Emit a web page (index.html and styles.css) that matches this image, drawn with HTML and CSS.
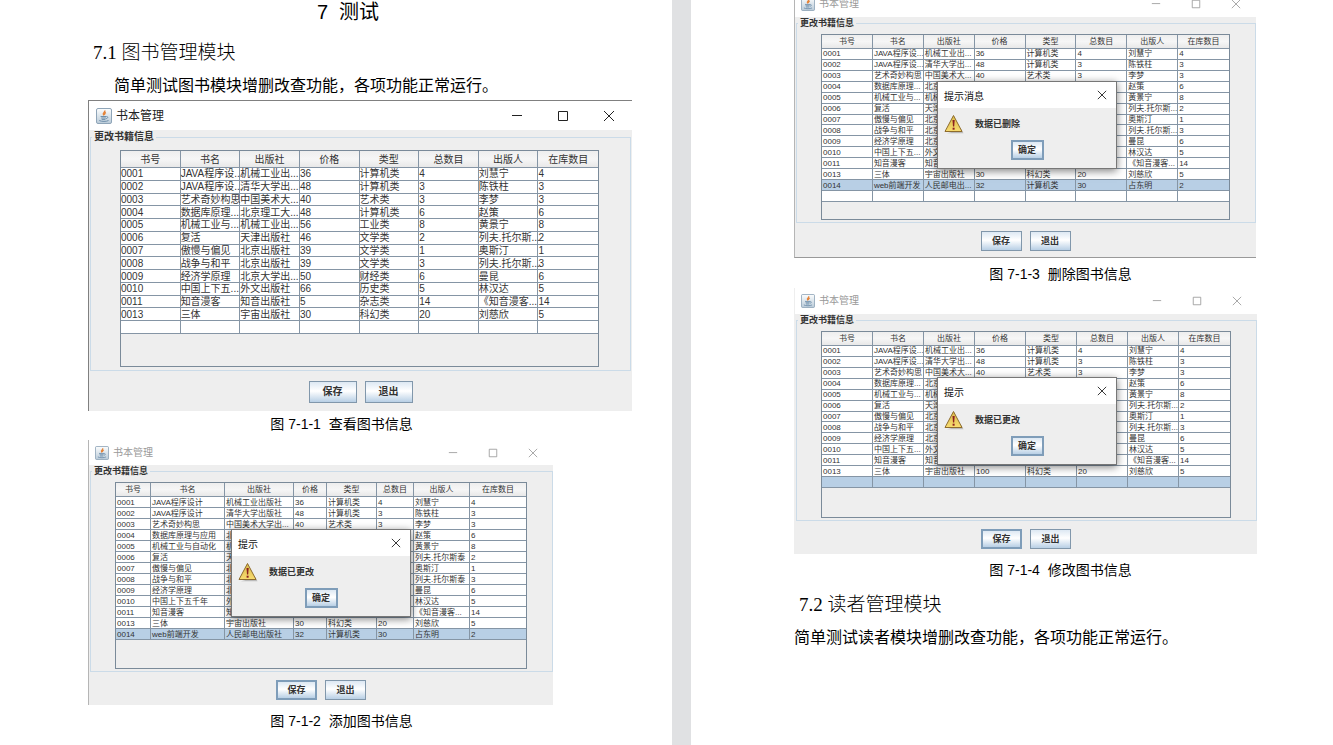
FILE: index.html
```html
<!DOCTYPE html>
<html lang="zh-CN">
<head>
<meta charset="utf-8">
<title>7 测试</title>
<link rel="stylesheet" href="styles.css">
</head>
<body>
<svg class="defs" aria-hidden="true">
  <defs>
    <linearGradient id="tile" x1="0" y1="0" x2="0" y2="1"><stop offset="0" stop-color="#fdfefe"/><stop offset="1" stop-color="#b9cad8"/></linearGradient>
    <linearGradient id="amber" x1="0" y1="0" x2="0" y2="1"><stop offset="0" stop-color="#d9b94a"/><stop offset="1" stop-color="#f8dc70"/></linearGradient>
  </defs>
  <symbol id="java" viewBox="0 0 16 16">
    <rect x=".5" y=".5" width="15" height="15" rx="1.5" fill="url(#tile)" stroke="#8fa5b8"/>
    <path d="M8.600 2.600c1.300 1.500-2.200 2.300-1.100 3.900l.5.9M10 4.600c-1.600.6-1.800 1.200-1.200 2.300" fill="none" stroke="#e5843a" stroke-width="1.500"/>
    <path d="M4.600 8.500h5.900M5.200 10h4.700M5.700 11.400h3.700M10.600 8.600c1.800-.2 1.500 1.700-.4 2" fill="none" stroke="#6f8fab"/>
    <path d="M3.300 12.500c2 1.200 7.400 1.200 9.200 0" fill="none" stroke="#6f8fab"/>
  </symbol>
  <symbol id="min" viewBox="0 0 12 12"><path d="M1 5.500h10" fill="none" stroke="currentColor"/></symbol>
  <symbol id="max" viewBox="0 0 12 12"><path d="M1.500 1.500h9v9h-9z" fill="none" stroke="currentColor"/></symbol>
  <symbol id="close" viewBox="0 0 12 12"><path d="M1 1l10 10M11 1L1 11" fill="none" stroke="currentColor"/></symbol>
  <symbol id="warn" viewBox="0 0 20 20">
    <path d="M3 19.200h16.500l-2-4z" fill="#bbb"/>
    <path d="M9.500 1.500l8.500 16H1z" fill="url(#amber)" stroke="#8d6b2c" stroke-linejoin="round"/>
    <path d="M8.500 6h2.200l-.5 6.500H9z" fill="#8c1f1f"/><rect x="8.600" y="13.700" width="2" height="2" fill="#8c1f1f"/>
  </symbol>
</svg>
<main class="spread">
<section class="page page-left">
  <h1 class="chapter">7&nbsp; 测试</h1>
  <h2 class="section">7.1 图书管理模块</h2>
  <p class="para indent">简单测试图书模块增删改查功能，各项功能正常运行。</p>

  <figure class="figure">
    <div class="window large">
      <header class="titlebar"><svg class="app-icon"><use href="#java"/></svg><span class="title">书本管理</span>
        <button class="ctl" aria-label="最小化"><svg><use href="#min"/></svg></button><button class="ctl" aria-label="最大化"><svg><use href="#max"/></svg></button><button class="ctl" aria-label="关闭"><svg><use href="#close"/></svg></button></header>
      <fieldset class="group"><legend>更改书籍信息</legend>
        <div class="pane"><table class="books books-1">
          <thead><tr><th>书号<th>书名<th>出版社<th>价格<th>类型<th>总数目<th>出版人<th>在库数目</thead>
          <tbody>
          <tr><td>0001<td>JAVA程序设...<td>机械工业出...<td>36<td>计算机类<td>4<td>刘慧宁<td>4
          <tr><td>0002<td>JAVA程序设...<td>清华大学出...<td>48<td>计算机类<td>3<td>陈铁柱<td>3
          <tr><td>0003<td>艺术奇妙构思<td>中国美术大...<td>40<td>艺术类<td>3<td>李梦<td>3
          <tr><td>0004<td>数据库原理...<td>北京理工大...<td>48<td>计算机类<td>6<td>赵策<td>6
          <tr><td>0005<td>机械工业与...<td>机械工业出...<td>56<td>工业类<td>8<td>黄景宁<td>8
          <tr><td>0006<td>复活<td>天津出版社<td>46<td>文学类<td>2<td>列夫.托尔斯...<td>2
          <tr><td>0007<td>傲慢与偏见<td>北京出版社<td>39<td>文学类<td>1<td>奥斯汀<td>1
          <tr><td>0008<td>战争与和平<td>北京出版社<td>39<td>文学类<td>3<td>列夫.托尔斯...<td>3
          <tr><td>0009<td>经济学原理<td>北京大学出...<td>50<td>财经类<td>6<td>曼昆<td>6
          <tr><td>0010<td>中国上下五...<td>外文出版社<td>66<td>历史类<td>5<td>林汉达<td>5
          <tr><td>0011<td>知音漫客<td>知音出版社<td>5<td>杂志类<td>14<td>《知音漫客...<td>14
          <tr><td>0013<td>三体<td>宇宙出版社<td>30<td>科幻类<td>20<td>刘慈欣<td>5
          <tr><td><td><td><td><td><td><td><td>
          </tbody></table></div>
      </fieldset>
      <div class="actions"><button class="btn">保存</button><button class="btn">退出</button></div>
    </div>
    <figcaption class="caption">图 7-1-1&nbsp; 查看图书信息</figcaption>
  </figure>

  <figure class="figure">
    <div class="window small win-add">
      <header class="titlebar"><svg class="app-icon"><use href="#java"/></svg><span class="title">书本管理</span>
        <button class="ctl" aria-label="最小化"><svg><use href="#min"/></svg></button><button class="ctl" aria-label="最大化"><svg><use href="#max"/></svg></button><button class="ctl" aria-label="关闭"><svg><use href="#close"/></svg></button></header>
      <fieldset class="group"><legend>更改书籍信息</legend>
        <div class="pane"><table class="books books-2">
          <colgroup><col class="c-id"><col class="c-name"><col class="c-press"><col class="c-price"><col class="c-type"><col class="c-total"><col class="c-author"><col></colgroup>
          <thead><tr><th>书号<th>书名<th>出版社<th>价格<th>类型<th>总数目<th>出版人<th>在库数目</thead>
          <tbody>
          <tr><td>0001<td>JAVA程序设计<td>机械工业出版社<td>36<td>计算机类<td>4<td>刘慧宁<td>4
          <tr><td>0002<td>JAVA程序设计<td>清华大学出版社<td>48<td>计算机类<td>3<td>陈铁柱<td>3
          <tr><td>0003<td>艺术奇妙构思<td>中国美术大学出...<td>40<td>艺术类<td>3<td>李梦<td>3
          <tr><td>0004<td>数据库原理与应用<td>北<td><td><td><td>赵策<td>6
          <tr><td>0005<td>机械工业与自动化<td>机<td><td><td><td>黄景宁<td>8
          <tr><td>0006<td>复活<td>天<td><td><td><td>列夫.托尔斯泰<td>2
          <tr><td>0007<td>傲慢与偏见<td>北<td><td><td><td>奥斯汀<td>1
          <tr><td>0008<td>战争与和平<td>北<td><td><td><td>列夫.托尔斯泰<td>3
          <tr><td>0009<td>经济学原理<td>北<td><td><td><td>曼昆<td>6
          <tr><td>0010<td>中国上下五千年<td>外<td><td><td><td>林汉达<td>5
          <tr><td>0011<td>知音漫客<td>知<td><td><td><td>《知音漫客...<td>14
          <tr><td>0013<td>三体<td>宇宙出版社<td>30<td>科幻类<td>20<td>刘慈欣<td>5
          <tr class="selected"><td>0014<td>web前端开发<td>人民邮电出版社<td>32<td>计算机类<td>30<td>占东明<td>2
          </tbody></table></div>
      </fieldset>
      <div class="actions"><button class="btn focused">保存</button><button class="btn">退出</button></div>
      <div class="dialog" role="dialog" aria-label="提示">
        <div class="dialog-bar"><span>提示</span><button class="ctl" aria-label="关闭"><svg><use href="#close"/></svg></button></div>
        <div class="dialog-msg"><svg class="warn"><use href="#warn"/></svg><strong>数据已更改</strong></div>
        <button class="btn ok">确定</button>
      </div>
    </div>
    <figcaption class="caption">图 7-1-2&nbsp; 添加图书信息</figcaption>
  </figure>
</section>

<section class="page page-right">
  <figure class="figure">
    <div class="window small win-delete">
      <header class="titlebar"><svg class="app-icon"><use href="#java"/></svg><span class="title">书本管理</span>
        <button class="ctl" aria-label="最小化"><svg><use href="#min"/></svg></button><button class="ctl" aria-label="最大化"><svg><use href="#max"/></svg></button><button class="ctl" aria-label="关闭"><svg><use href="#close"/></svg></button></header>
      <fieldset class="group"><legend>更改书籍信息</legend>
        <div class="pane"><table class="books books-3">
          <thead><tr><th>书号<th>书名<th>出版社<th>价格<th>类型<th>总数目<th>出版人<th>在库数目</thead>
          <tbody>
          <tr><td>0001<td>JAVA程序设...<td>机械工业出...<td>36<td>计算机类<td>4<td>刘慧宁<td>4
          <tr><td>0002<td>JAVA程序设...<td>清华大学出...<td>48<td>计算机类<td>3<td>陈铁柱<td>3
          <tr><td>0003<td>艺术奇妙构思<td>中国美术大...<td>40<td>艺术类<td>3<td>李梦<td>3
          <tr><td>0004<td>数据库原理...<td>北京<td><td><td><td>赵策<td>6
          <tr><td>0005<td>机械工业与...<td>机械<td><td><td><td>黄景宁<td>8
          <tr><td>0006<td>复活<td>天津<td><td><td><td>列夫.托尔斯...<td>2
          <tr><td>0007<td>傲慢与偏见<td>北京<td><td><td><td>奥斯汀<td>1
          <tr><td>0008<td>战争与和平<td>北京<td><td><td><td>列夫.托尔斯...<td>3
          <tr><td>0009<td>经济学原理<td>北京<td><td><td><td>曼昆<td>6
          <tr><td>0010<td>中国上下五...<td>外文<td><td><td><td>林汉达<td>5
          <tr><td>0011<td>知音漫客<td>知音<td><td><td><td>《知音漫客...<td>14
          <tr><td>0013<td>三体<td>宇宙出版社<td>30<td>科幻类<td>20<td>刘慈欣<td>5
          <tr class="selected"><td>0014<td>web前端开发<td>人民邮电出...<td>32<td>计算机类<td>30<td>占东明<td>2
          <tr><td><td><td><td><td><td><td><td>
          </tbody></table></div>
      </fieldset>
      <div class="actions"><button class="btn">保存</button><button class="btn">退出</button></div>
      <div class="dialog" role="dialog" aria-label="提示消息">
        <div class="dialog-bar"><span>提示消息</span><button class="ctl" aria-label="关闭"><svg><use href="#close"/></svg></button></div>
        <div class="dialog-msg"><svg class="warn"><use href="#warn"/></svg><strong>数据已删除</strong></div>
        <button class="btn ok">确定</button>
      </div>
    </div>
    <figcaption class="caption">图 7-1-3&nbsp; 删除图书信息</figcaption>
  </figure>

  <figure class="figure">
    <div class="window small win-edit">
      <header class="titlebar"><svg class="app-icon"><use href="#java"/></svg><span class="title">书本管理</span>
        <button class="ctl" aria-label="最小化"><svg><use href="#min"/></svg></button><button class="ctl" aria-label="最大化"><svg><use href="#max"/></svg></button><button class="ctl" aria-label="关闭"><svg><use href="#close"/></svg></button></header>
      <fieldset class="group"><legend>更改书籍信息</legend>
        <div class="pane"><table class="books books-4">
          <thead><tr><th>书号<th>书名<th>出版社<th>价格<th>类型<th>总数目<th>出版人<th>在库数目</thead>
          <tbody>
          <tr><td>0001<td>JAVA程序设...<td>机械工业出...<td>36<td>计算机类<td>4<td>刘慧宁<td>4
          <tr><td>0002<td>JAVA程序设...<td>清华大学出...<td>48<td>计算机类<td>3<td>陈铁柱<td>3
          <tr><td>0003<td>艺术奇妙构思<td>中国美术大...<td>40<td>艺术类<td>3<td>李梦<td>3
          <tr><td>0004<td>数据库原理...<td>北京<td><td><td><td>赵策<td>6
          <tr><td>0005<td>机械工业与...<td>机械<td><td><td><td>黄景宁<td>8
          <tr><td>0006<td>复活<td>天津<td><td><td><td>列夫.托尔斯...<td>2
          <tr><td>0007<td>傲慢与偏见<td>北京<td><td><td><td>奥斯汀<td>1
          <tr><td>0008<td>战争与和平<td>北京<td><td><td><td>列夫.托尔斯...<td>3
          <tr><td>0009<td>经济学原理<td>北京<td><td><td><td>曼昆<td>6
          <tr><td>0010<td>中国上下五...<td>外文<td><td><td><td>林汉达<td>5
          <tr><td>0011<td>知音漫客<td>知音<td><td><td><td>《知音漫客...<td>14
          <tr><td>0013<td>三体<td>宇宙出版社<td>100<td>科幻类<td>20<td>刘慈欣<td>5
          <tr class="selected"><td><td><td><td><td><td><td><td>
          </tbody></table></div>
      </fieldset>
      <div class="actions"><button class="btn focused">保存</button><button class="btn">退出</button></div>
      <div class="dialog" role="dialog" aria-label="提示">
        <div class="dialog-bar"><span>提示</span><button class="ctl" aria-label="关闭"><svg><use href="#close"/></svg></button></div>
        <div class="dialog-msg"><svg class="warn"><use href="#warn"/></svg><strong>数据已更改</strong></div>
        <button class="btn ok">确定</button>
      </div>
    </div>
    <figcaption class="caption">图 7-1-4&nbsp; 修改图书信息</figcaption>
  </figure>

  <h2 class="section section-next">7.2 读者管理模块</h2>
  <p class="para">简单测试读者模块增删改查功能，各项功能正常运行。</p>
</section>
</main>
</body>
</html>
```
FILE: styles.css
```css
* { box-sizing: border-box; }
body {
  margin: 0;
  background: #fff;
  color: #000;
  font-family: "Liberation Sans", "Noto Sans CJK SC", sans-serif;
}
.defs { position: absolute; width: 0; height: 0; }

/* two facing pages with a grey gutter */
.spread { display: grid; grid-template-columns: 672fr 661fr; min-height: 100vh; overflow: hidden; }
.page { min-width: 0; }
.page-left { padding: 0 40px 0 88px; }
.page-right { padding: 0 76px 0 103px; border-left: 19px solid #e0e1e3; }

.chapter { margin: 0; padding-right: 24px; font-size: 20px; line-height: 24px; font-weight: 400; text-align: center; }
.section {
  margin: 17px 0 0 5px;
  font: 300 19px/24px "Liberation Serif", "Noto Sans CJK SC", serif;
  white-space: nowrap;
}
.section-next { margin-top: 13px; }
.para {
  margin: 9px 0 0;
  font-family: "Liberation Serif", "Noto Sans CJK SC", serif;
  font-size: 16px;
  line-height: 24px;
  white-space: nowrap;
}
.indent { margin: 9px 0 2px; padding-left: 26px; }

.figure { margin: 0; }
.caption { margin: 3px 0 6px; padding-right: 37px; font-size: 14px; line-height: 20px; text-align: center; }
.win-add + .caption { margin-top: 6px; }
.page-right .caption { margin: 6px 0 4px; padding: 0 0 0 70px; }
.win-edit + .caption { margin-bottom: 0; }

/* application windows */
.window { position: relative; background: #eee; color: #333; }
.large { border-left: 1px solid #808080; border-top: 1px solid #808080; }
.small { max-width: 465px; border-left: 1px solid #b5b5b5; }
.win-delete { max-width: 462px; margin-top: -9px; border-bottom: 1px solid #999; }
.win-edit { max-width: 463px; border-left-color: #eee; }

.titlebar { display: flex; align-items: center; height: 29px; padding-left: 7px; background: #fff; color: #222; }
.title { flex: 1; margin-left: 4px; font-size: 12px; line-height: 16px; }
.app-icon { width: 16px; height: 16px; }
.small .titlebar { height: 26px; padding-left: 6px; color: #999; }
.win-add .titlebar { height: 25px; }
.small .title { font-size: 10px; }
.small .app-icon { width: 14px; height: 14px; }

.ctl { display: flex; justify-content: center; align-items: center; width: 46px; height: 24px; padding: 0; border: 0; background: none; color: inherit; }
.ctl svg { width: 12px; height: 12px; }
.small .ctl { width: 40px; }
.small .ctl svg { width: 10px; height: 10px; }

.group { min-width: 0; margin: 0 1px; padding: 0; border: 1px solid #cbdbe8; }
.group legend { margin-left: 1px; padding: 0 2px; font-size: 10px; line-height: 14px; font-weight: 700; }
.small .group { margin-right: 0; }
.small .group legend { font-size: 9px; line-height: 12px; }
.pane { height: 217px; margin: 6px 31px 3px 29px; border: 1px solid #7a8a99; }
.small .pane { height: 187px; margin: 5px 25px 2px 24px; }
.win-delete .pane { height: 186px; }

.books { width: 100%; table-layout: fixed; border-collapse: separate; border-spacing: 0; font-size: 10px; line-height: 11px; white-space: nowrap; }
.books th { height: 17px; padding: 0; border: solid #8595a5; border-width: 0 1px 1px 0; background: linear-gradient(#eee, #f6f6f6 50%, #e8e8e8); font-weight: 400; text-align: center; }
.books td { height: 12px; padding: 0; border: solid #8595a5; border-width: 0 1px 1px 0; background: #fff; vertical-align: middle; }
.books th:last-child, .books td:last-child { border-right: 0; }
.books .selected td { background: #b8cfe5; }
.small .books { font-size: 8px; line-height: 9px; }
.small .books th { height: 14px; }
.small .books td { height: 10px; padding-left: 1px; }
.books-1 { height: 183px; }
.books-2 { height: 157px; }
.books-3 { height: 167px; }
.books-4 { height: 156px; }
.c-id { width: 35px; }
.c-name { width: 74px; }
.c-press { width: 69px; }
.c-price { width: 33px; }
.c-type { width: 50px; }
.c-total { width: 37px; }
.c-author { width: 56px; }

.actions { display: flex; justify-content: center; gap: 8px; padding: 10px 0 8px; }
.small .actions { padding: 8px 0 5px; }
.win-delete .actions { padding-bottom: 6px; }
.btn {
  width: 48px;
  height: 22px;
  padding: 0;
  border: 1px solid #8197ab;
  background: linear-gradient(#dde8f3, #fff 45%, #b8cfe5);
  color: #333;
  font: 700 10px/12px "Liberation Sans", "Noto Sans CJK SC", sans-serif;
}
.small .btn { width: 41px; height: 20px; font-size: 9px; }
.small .focused, .small .ok { border: 2px solid #7f9db9; }

/* message boxes lie over the window */
.dialog { position: absolute; left: 142px; top: 89px; width: 180px; border: 1px solid #777; background: #eee; box-shadow: 0 2px 8px rgba(0, 0, 0, .5); }
.win-delete .dialog { top: 90px; }
.dialog-bar { display: flex; justify-content: space-between; align-items: center; height: 26px; padding-left: 6px; background: #fff; color: #111; font-size: 10px; }
.small .dialog .ctl { width: 28px; }
.dialog-msg { display: flex; align-items: center; gap: 11px; padding: 6px; font-size: 9px; line-height: 12px; }
.warn { width: 20px; height: 20px; }
.small .ok { display: block; width: 33px; margin: 0 auto 8px; }
```
